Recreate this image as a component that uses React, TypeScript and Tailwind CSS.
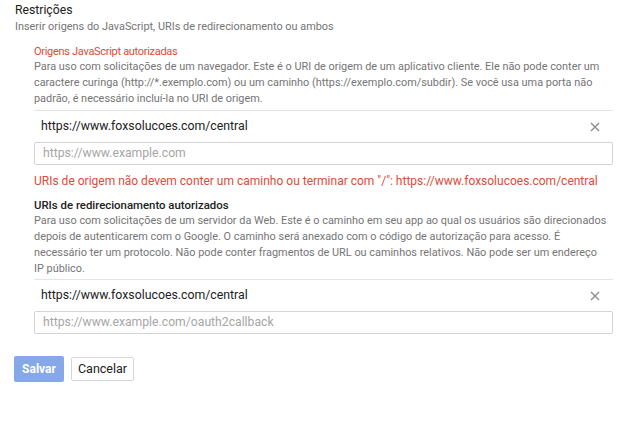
import React from "react";

function XIcon() {
  return (
    <svg width="10" height="10" viewBox="0 0 10 10" className="block">
      <path d="M1 1 L9 9 M9 1 L1 9" stroke="#8a8a8a" strokeWidth="1.3" fill="none" />
    </svg>
  );
}

function Lines({ lines }: { lines: string[] }) {
  return (
    <div className="text-[10.9px] leading-[16px] text-[#757575]">
      {lines.map((l, i) => (
        <div key={i} className="whitespace-nowrap">{l}</div>
      ))}
    </div>
  );
}

function Entry({ value }: { value: string }) {
  return (
    <div className="flex items-center justify-between h-[32px] border-t border-[#e4e4e4] pl-[7px] pr-[13px]">
      <span className="text-[12.3px] text-[#212121]">{value}</span>
      <XIcon />
    </div>
  );
}

function Input({ placeholder }: { placeholder: string }) {
  return (
    <div className="h-[23px] border border-[#d4d4d4] rounded-[2px] flex items-center pl-[8px]">
      <span className="text-[12.2px] text-[#a6a6a6]">{placeholder}</span>
    </div>
  );
}

export default function App() {
  return (
    <div className="w-[630px] h-[443px] bg-white pl-[14px] font-['Roboto',sans-serif]">
      <div className="ml-[1px] pt-[1px] text-[12.2px] leading-[18px] text-[#212121]">Restrições</div>
      <div className="ml-[1px] text-[10.9px] leading-[16px] text-[#757575]">
        Inserir origens do JavaScript, URIs de redirecionamento ou ambos
      </div>
      <div className="ml-[20px] w-[579px]">
        <div className="mt-[9px] text-[11px] tracking-[-0.3px] leading-[15px] text-[#dd4b39] whitespace-nowrap">Origens JavaScript autorizadas</div>
        <Lines
          lines={[
            "Para uso com solicitações de um navegador. Este é o URI de origem de um aplicativo cliente. Ele não pode conter um",
            "caractere curinga (http://*.exemplo.com) ou um caminho (https://exemplo.com/subdir). Se você usa uma porta não",
            "padrão, é necessário incluí-la no URI de origem.",
          ]}
        />
        <div className="mt-[3px]">
          <Entry value="https://www.foxsolucoes.com/central" />
        </div>
        <Input placeholder="https://www.example.com" />
        <div className="mt-[8px] text-[12px] leading-[16px] text-[#dd4b39] whitespace-nowrap">
          URIs de origem não devem conter um caminho ou terminar com "/": https://www.foxsolucoes.com/central
        </div>
        <div className="mt-[8px] text-[11.4px] leading-[16px] font-medium text-[#212121] whitespace-nowrap">
          URIs de redirecionamento autorizados
        </div>
        <Lines
          lines={[
            "Para uso com solicitações de um servidor da Web. Este é o caminho em seu app ao qual os usuários são direcionados",
            "depois de autenticarem com o Google. O caminho será anexado com o código de autorização para acesso. É",
            "necessário ter um protocolo. Não pode conter fragmentos de URL ou caminhos relativos. Não pode ser um endereço",
            "IP público.",
          ]}
        />
        <div className="mt-[2px]">
          <Entry value="https://www.foxsolucoes.com/central" />
        </div>
        <Input placeholder="https://www.example.com/oauth2callback" />
      </div>
      <div className="mt-[22px] flex items-center gap-[7px]">
        <div className="h-[26px] w-[50px] rounded-[2px] bg-[#86a8e7] text-white text-[12px] font-bold flex items-center justify-center">
          Salvar
        </div>
        <div className="h-[24px] w-[63px] rounded-[2px] border border-[#d6d6d6] bg-white text-[12.5px] text-[#212121] flex items-center justify-center">
          Cancelar
        </div>
      </div>
    </div>
  );
}
